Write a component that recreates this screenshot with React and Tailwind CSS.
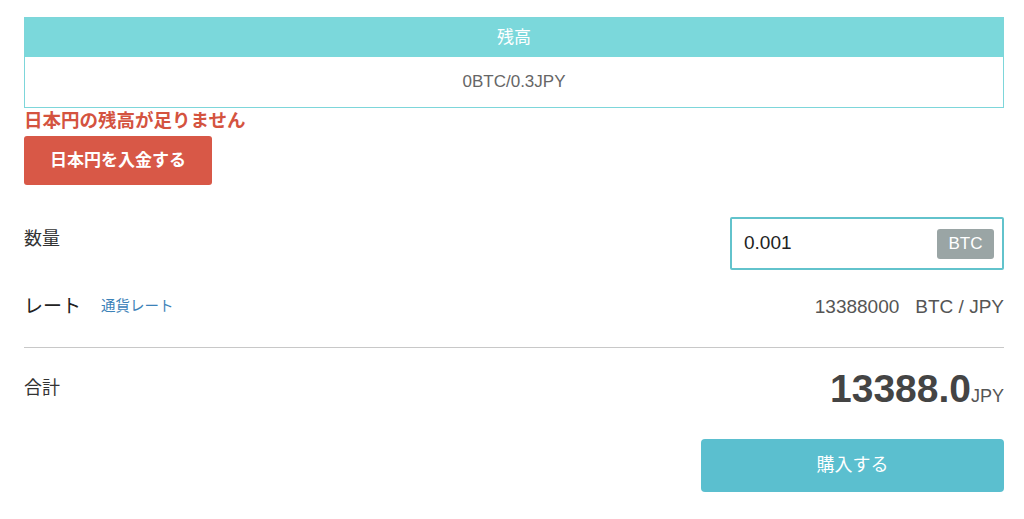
const font = "font-['Liberation_Sans','Noto_Sans_CJK_JP',sans-serif]";

function BalanceBox() {
  return (
    <div className="border border-[#7dd6da]">
      <div className="flex h-[39px] items-center justify-center bg-[#7bd8db] text-[17px] text-white">残高</div>
      <div className="flex h-[50px] items-center justify-center bg-white text-[17px] text-[#666]">0BTC/0.3JPY</div>
    </div>
  );
}

export default function App() {
  return (
    <div className={`${font} h-[519px] w-[1024px] overflow-hidden bg-white pl-[24px] pr-[20px] pt-[17px] text-[#333]`}>
      <BalanceBox />

      <p className="mt-[1px] text-[18.5px] font-bold leading-[24px] text-[#d4533f]">日本円の残高が足りません</p>
      <button
        type="button"
        className="mt-[3px] h-[49px] w-[188px] rounded-[3px] bg-[#d85847] text-[17px] font-bold text-white"
      >
        日本円を入金する
      </button>

      <div className="mt-[32px] flex items-start justify-between">
        <span className="mt-[9px] text-[18px] text-[#333]">数量</span>
        <div className="flex h-[53px] w-[274px] items-center justify-between rounded-[2px] border-2 border-[#62c3cc] pl-[12px] pr-[8px]">
          <span className="text-[19px] text-[#222]">0.001</span>
          <span className="flex h-[30px] w-[57px] items-center justify-center rounded-[3px] bg-[#9aa5a5] text-[17px] text-white">BTC</span>
        </div>
      </div>

      <div className="mt-[23px] flex items-center justify-between">
        <div className="flex items-center">
          <span className="text-[19px] text-[#222]">レート</span>
          <span className="ml-[20px] text-[14.5px] text-[#3c82b8]">通貨レート</span>
        </div>
        <span className="text-[19px] text-[#555]">
          13388000<span className="ml-[16px]">BTC / JPY</span>
        </span>
      </div>

      <div className="mt-[25px] h-px bg-[#c8c8c8]" />

      <div className="mt-[12px] flex items-center justify-between">
        <span className="text-[18px] text-[#333]">合計</span>
        <span className="flex items-baseline text-[#444]">
          <span className="text-[39px] font-bold">13388.0</span>
          <span className="text-[18px] text-[#555]">JPY</span>
        </span>
      </div>

      <div className="mt-[21px] flex justify-end">
        <button
          type="button"
          className="h-[53px] w-[303px] rounded-[4px] bg-[#5bbfcf] text-[18px] text-white"
        >
          購入する
        </button>
      </div>
    </div>
  );
}
